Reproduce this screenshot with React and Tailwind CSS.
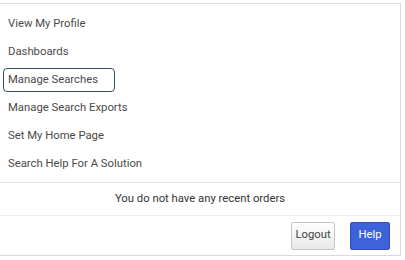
export default function App() {
  const items = [
    "View My Profile",
    "Dashboards",
    "Manage Searches",
    "Manage Search Exports",
    "Set My Home Page",
    "Search Help For A Solution",
  ];
  return (
    <div className="w-[405px] h-[260px] bg-white pt-[3px]" style={{ fontFamily: "Roboto, 'Liberation Sans', sans-serif" }}>
      <div className="w-[401px] h-[253px] border-t border-r border-b border-[#d9d9d9] flex flex-col text-[11.3px] text-[#4a4a4a]">
        <div className="flex flex-col pt-[6px] pb-[4px]">
          {items.map((t) =>
            t === "Manage Searches" ? (
              <div key={t} className="h-[28px] flex items-center pl-[3px]">
                <div className="h-[24px] w-[112px] flex items-center pl-[4px] border-[1.5px] border-[#2f5366] rounded-[4px]">
                  {t}
                </div>
              </div>
            ) : (
              <div key={t} className="h-[28px] flex items-center pl-[8px]">
                {t}
              </div>
            )
          )}
        </div>
        <div className="border-t border-[#e6e6e6] h-[33px] flex items-center justify-center text-[#333]">
          You do not have any recent orders
        </div>
        <div className="border-t border-[#ececec] flex-1 flex items-center justify-end gap-[15px] pr-[10px]">
          <button className="h-[28px] w-[44px] border border-[#c6c6c6] rounded-[2px] bg-gradient-to-b from-white to-[#e8e8e8] text-[#444] text-[11.3px]">
            Logout
          </button>
          <button className="h-[28px] w-[40px] border border-[#3352b8] rounded-[2px] bg-[#3d62d9] text-white text-[11.3px]">
            Help
          </button>
        </div>
      </div>
    </div>
  );
}
